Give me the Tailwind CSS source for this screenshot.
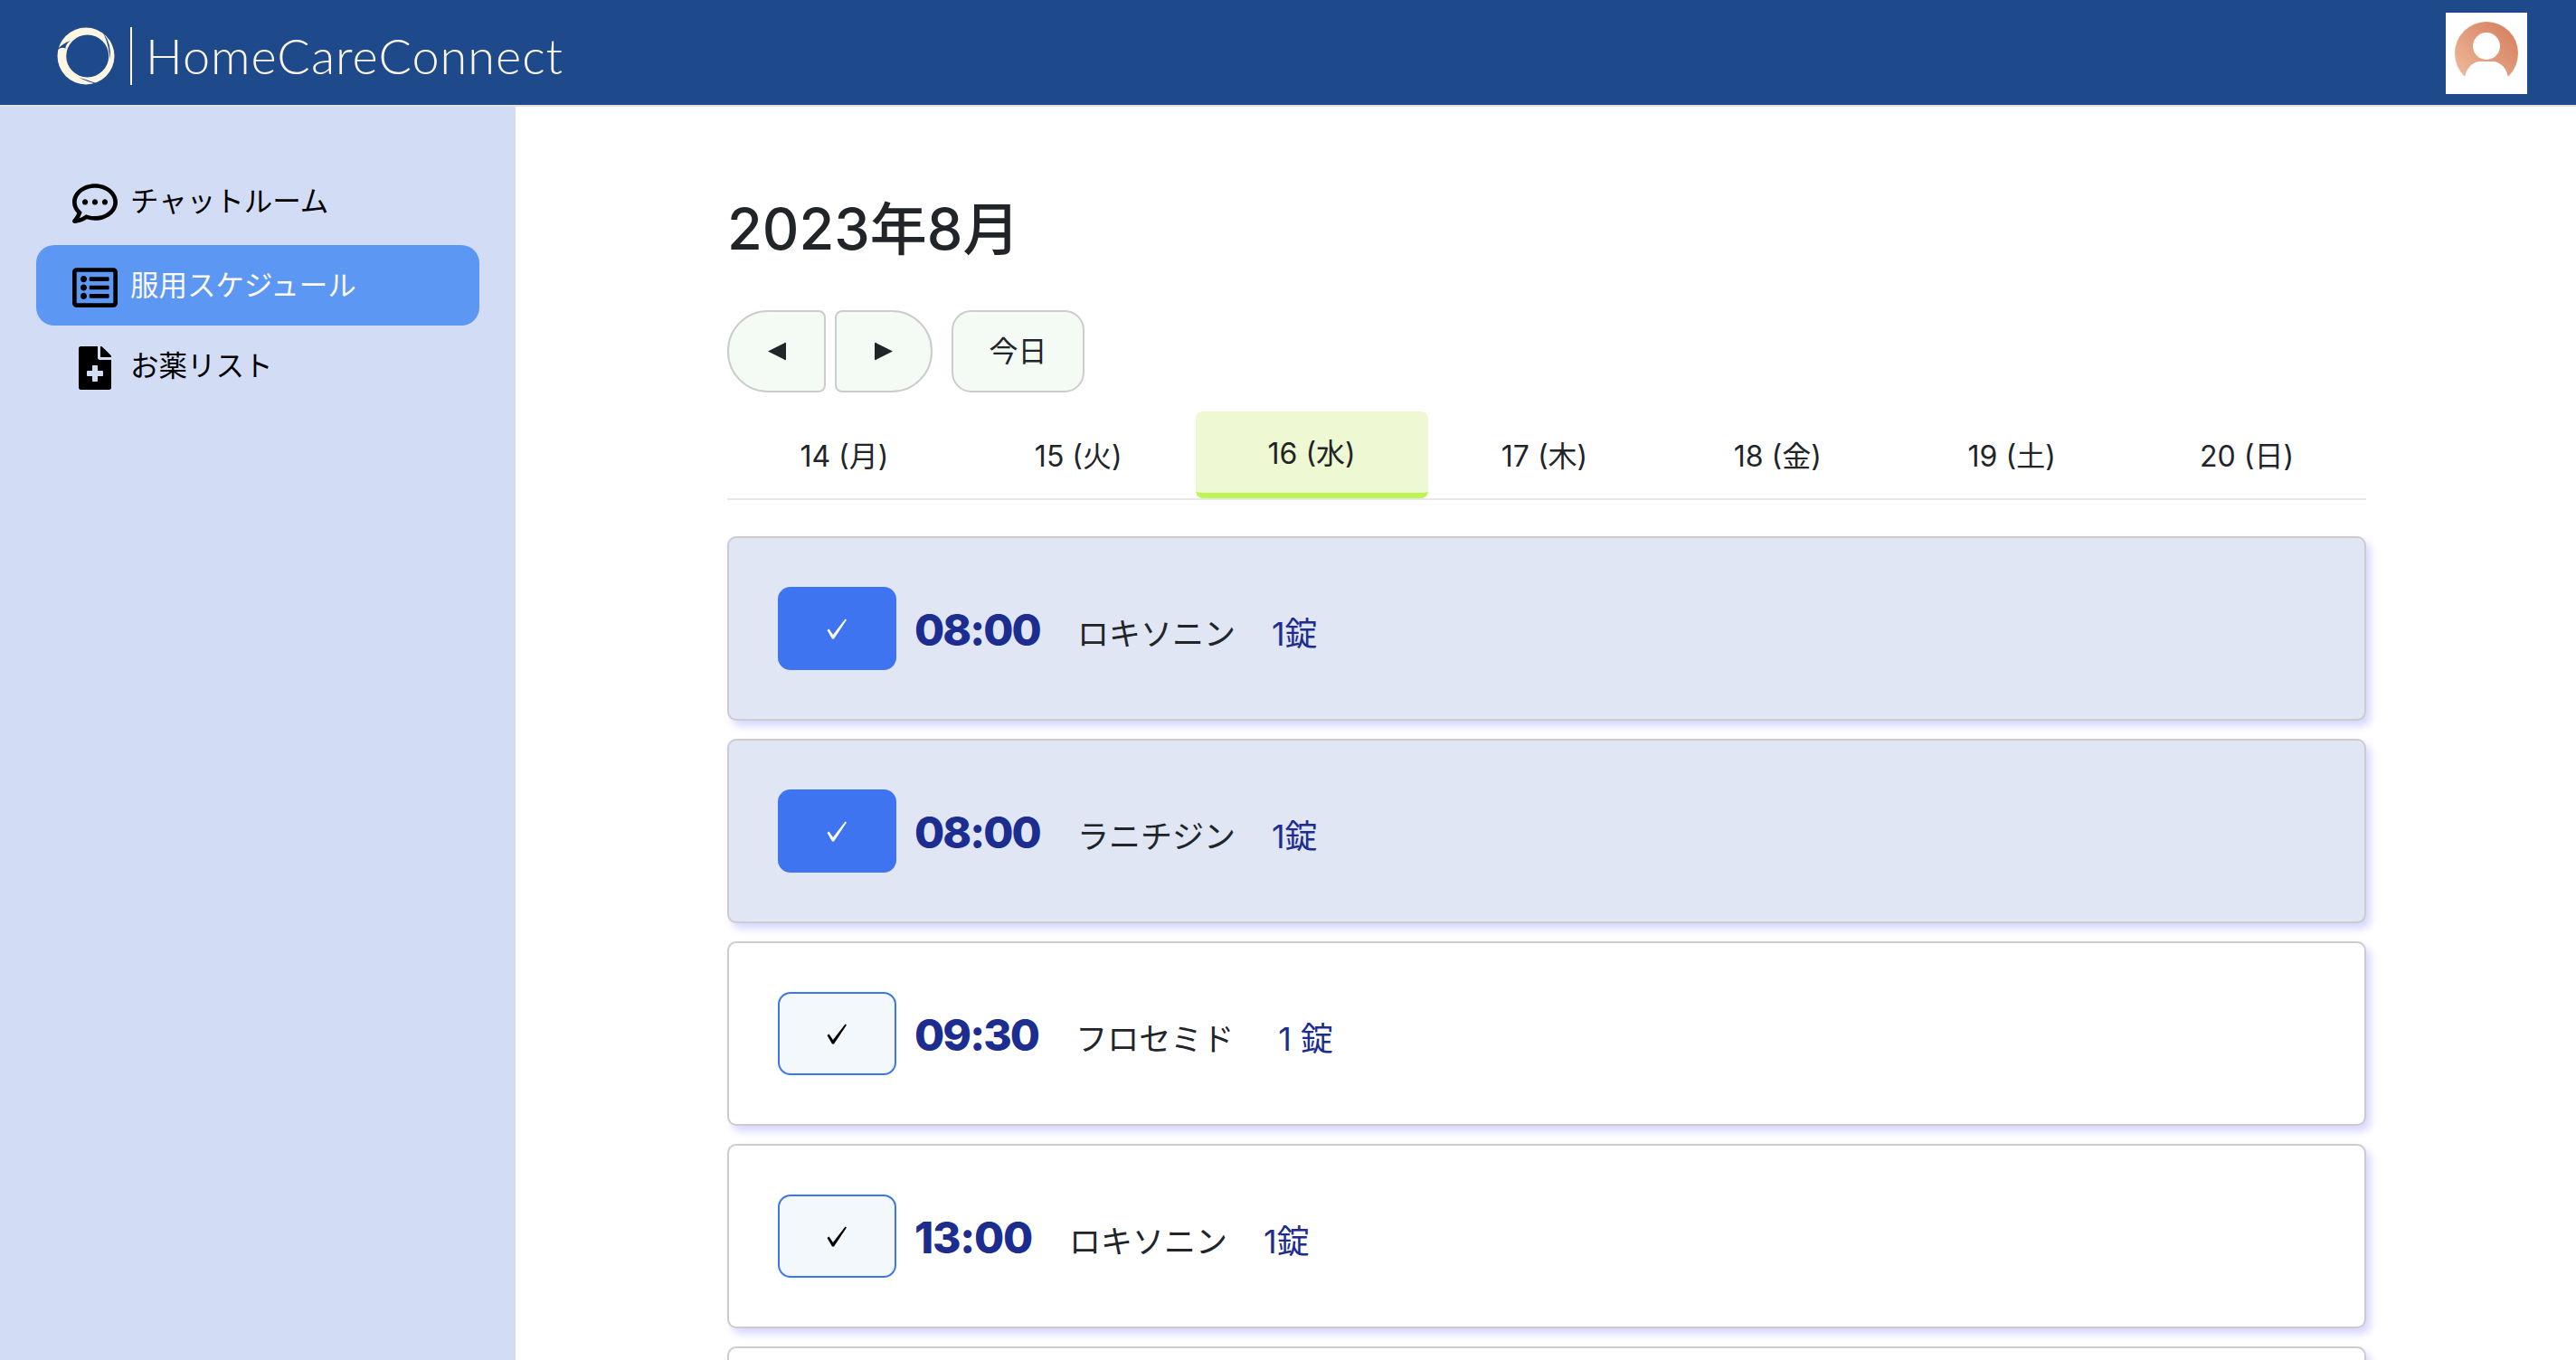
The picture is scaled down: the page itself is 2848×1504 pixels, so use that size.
<!DOCTYPE html>
<html lang="ja">
<head>
<meta charset="UTF-8">
<title>HomeCareConnect</title>
<script src="https://cdn.jsdelivr.net/npm/@tailwindcss/browser@4"></script>
</head>
<body class="h-screen overflow-hidden flex flex-col bg-white text-[#212529] font-['Inter','Noto_Sans_CJK_JP',sans-serif]">

<!-- header -->
<header class="h-[118px] shrink-0 flex items-center justify-between bg-[#1e4a8c] border-b-2 border-[#e2e2e2] pl-[62px] pr-[54px]">
  <div class="flex items-center mt-[7px]">
    <svg class="w-[66px] h-[66px]" viewBox="0 0 66 66">
      <path fill="#fdf6e3" fill-rule="evenodd" d="M33 1.500a31.500 31.500 0 1 0 0 63a31.500 31.500 0 1 0 0-63ZM34.700 9.500a23.500 23.500 0 1 1 0 47a23.500 23.500 0 1 1 0-47Z"/>
      <path fill="#1e4a8c" d="M1 26Q7 19 16 16Q10 20 10.500 25Q8 22 1 26Z"/>
      <path fill="#1e4a8c" d="M52 7Q62 20 59.500 37Q59 22 52 7Z"/>
      <path fill="#1e4a8c" d="M25 56.500Q36 60 47 64Q36 62.500 25 56.500Z"/>
    </svg>
    <div class="w-[2px] h-[64px] bg-[#fdf6e3] ml-[16px] mr-[15px]"></div>
    <span class="font-['Lato',sans-serif] font-light text-[54px] tracking-[1px] leading-none text-[#fdf6e3]">HomeCareConnect</span>
  </div>
  <div class="w-[90px] h-[90px] mt-[2px] bg-white flex items-center justify-center">
    <svg class="w-[90px] h-[90px]" viewBox="0 0 90 90">
      <defs>
        <linearGradient id="avatar-grad" x1="0" y1="1" x2="1" y2="0">
          <stop offset="0" stop-color="#f0bf9e"/>
          <stop offset="1" stop-color="#d27a5a"/>
        </linearGradient>
      </defs>
      <circle cx="45" cy="45" r="35" fill="url(#avatar-grad)"/>
      <circle cx="45" cy="37" r="15" fill="#fff"/>
      <path d="M21 90V74C21 62 30 54 38 54H52C60 54 69 62 69 74V90Z" fill="#fff"/>
    </svg>
  </div>
</header>

<div class="flex-1 flex min-h-0">
  <!-- sidebar -->
  <aside class="w-[570px] shrink-0 bg-[#d2dcf5] pt-[60px] pl-[40px] pr-[40px] text-[31.500px] leading-none text-black font-['Noto_Sans_CJK_JP',sans-serif]">
    <a class="h-[89px] mb-[4px] flex items-center gap-[14px] pl-[40px]">
      <svg class="w-[50px] h-[44px] shrink-0 mt-[4px]" viewBox="0 32 512 448" fill="currentColor">
        <path d="M144 208c-17.700 0-32 14.300-32 32s14.300 32 32 32 32-14.300 32-32-14.300-32-32-32zm112 0c-17.700 0-32 14.300-32 32s14.300 32 32 32 32-14.300 32-32-14.300-32-32-32zm112 0c-17.700 0-32 14.300-32 32s14.300 32 32 32 32-14.300 32-32-14.300-32-32-32zM256 32C114.600 32 0 125.100 0 240c0 47.600 19.900 91.200 52.900 126.300C38 405.700 7 439.100 6.500 439.500c-6.600 7-8.400 17.200-4.600 26S14.400 480 24 480c61.500 0 110-25.700 139.100-46.300C192 442.800 223.200 448 256 448c141.400 0 256-93.100 256-208S397.400 32 256 32zm0 368c-26.700 0-53.100-4.100-78.400-12.100l-22.700-7.200-19.500 13.800c-14.300 10.100-33.900 21.400-57.500 29 7.300-12.100 14.400-25.700 19.900-40.200l10.600-28.100-20.600-21.800C69.700 314.100 48 282.200 48 240c0-88.200 93.300-160 208-160s208 71.800 208 160-93.300 160-208 160z"/>
      </svg>
      <span class="mb-[3px]">チャットルーム</span>
    </a>
    <a class="h-[89px] flex items-center gap-[14px] pl-[40px] rounded-[20px] bg-[#5c98f3] text-[#fdf9ee]">
      <svg class="w-[50px] h-[44px] shrink-0 mt-[4px] text-black" viewBox="0 32 512 448" fill="currentColor">
        <path d="M464 32H48C21.490 32 0 53.490 0 80v352c0 26.510 21.490 48 48 48h416c26.510 0 48-21.490 48-48V80c0-26.510-21.490-48-48-48zm-6 400H54a6 6 0 0 1-6-6V86a6 6 0 0 1 6-6h404a6 6 0 0 1 6 6v340a6 6 0 0 1-6 6zm-42-92v24c0 6.627-5.373 12-12 12H204c-6.627 0-12-5.373-12-12v-24c0-6.627 5.373-12 12-12h200c6.627 0 12 5.373 12 12zm0-96v24c0 6.627-5.373 12-12 12H204c-6.627 0-12-5.373-12-12v-24c0-6.627 5.373-12 12-12h200c6.627 0 12 5.373 12 12zm0-96v24c0 6.627-5.373 12-12 12H204c-6.627 0-12-5.373-12-12v-24c0-6.627 5.373-12 12-12h200c6.627 0 12 5.373 12 12zm-252 12c0 19.882-16.118 36-36 36s-36-16.118-36-36 16.118-36 36-36 36 16.118 36 36zm0 96c0 19.882-16.118 36-36 36s-36-16.118-36-36 16.118-36 36-36 36 16.118 36 36zm0 96c0 19.882-16.118 36-36 36s-36-16.118-36-36 16.118-36 36-36 36 16.118 36 36z"/>
      </svg>
      <span class="mb-[3px]">服用スケジュール</span>
    </a>
    <a class="h-[89px] flex items-center gap-[14px] pl-[40px]">
      <span class="w-[50px] shrink-0 flex justify-center mt-[4px]">
        <svg class="w-[36px] h-[48px]" viewBox="0 0 384 512" fill="currentColor">
          <path d="M377 105L279.100 7c-4.500-4.500-10.600-7-17-7H256v128h128v-6.100c0-6.300-2.500-12.400-7-16.900zm-153 31V0H24C10.700 0 0 10.700 0 24v464c0 13.300 10.700 24 24 24h336c13.300 0 24-10.700 24-24V160H248c-13.200 0-24-10.800-24-24zm64 160v48c0 4.400-3.600 8-8 8h-56v56c0 4.400-3.600 8-8 8h-48c-4.400 0-8-3.600-8-8v-56h-56c-4.400 0-8-3.600-8-8v-48c0-4.400 3.600-8 8-8h56v-56c0-4.400 3.600-8 8-8h48c4.400 0 8 3.600 8 8v56h56c4.400 0 8 3.600 8 8z"/>
        </svg>
      </span>
      <span class="mb-[3px]">お薬リスト</span>
    </a>
  </aside>

  <!-- main -->
  <main class="flex-1 min-w-0 overflow-hidden pl-[234px] pr-[232px] pt-[99px]">
    <h1 class="text-[63px] leading-[72px] font-medium">2023年8月</h1>

    <div class="flex mt-[54px] h-[91px] text-[32px]">
      <button class="w-[109px] bg-[#f3fbf4] border-2 border-[#cccccc] rounded-l-[45px] rounded-r-[8px] flex items-center justify-center">
        <svg class="w-[21px] h-[21px]" viewBox="0 0 21 21" fill="#212529"><path d="M1 10.500L19 1.500a1 1 0 0 1 2 1v16a1 1 0 0 1-2 1Z"/></svg>
      </button>
      <button class="w-[108px] ml-[10px] bg-[#f3fbf4] border-2 border-[#cccccc] rounded-r-[45px] rounded-l-[8px] flex items-center justify-center">
        <svg class="w-[21px] h-[21px]" viewBox="0 0 21 21" fill="#212529"><path d="M20 10.500L2 1.500a1 1 0 0 0-2 1v16a1 1 0 0 0 2 1Z"/></svg>
      </button>
      <button class="w-[147px] ml-[21px] bg-[#f3fbf4] border-2 border-[#cccccc] rounded-[22px]">今日</button>
    </div>

    <!-- day tabs -->
    <div class="grid grid-cols-7 mt-[21px] h-[98px] border-b-2 border-[#e8e8e8] text-[32px]">
      <div class="flex items-center justify-center pt-[4px]">14 (月)</div>
      <div class="flex items-center justify-center pt-[4px]">15 (火)</div>
      <div class="flex items-center justify-center pt-[4px] mr-[2px] bg-[#eef8d2] border-b-[6px] border-[#bbf651] rounded-[8px]">16 (水)</div>
      <div class="flex items-center justify-center pt-[4px] pr-[5px]">17 (木)</div>
      <div class="flex items-center justify-center pt-[4px] pr-[7px]">18 (金)</div>
      <div class="flex items-center justify-center pt-[4px] pr-[7px]">19 (土)</div>
      <div class="flex items-center justify-center pt-[4px] pr-[5px]">20 (日)</div>
    </div>

    <!-- dose cards -->
    <div class="mt-[40px] flex flex-col gap-[20px]">
      <div class="h-[204px] shrink-0 flex items-center pl-[54px] bg-[#e0e6f4] border-2 border-[#cccccc] rounded-[10px] shadow-[5px_6px_10px_#d6d6ff]">
        <button class="w-[131px] h-[92px] shrink-0 flex items-center justify-center rounded-[14px] bg-[#3f74f0] text-white">
          <svg class="w-[23px] h-[23px]" viewBox="0 0 23 23" fill="currentColor"><path d="M0.500 13L2.500 11.500L7 18L20.500 0.500L22 1.500L8 22.500H6Z"/></svg>
        </button>
        <div class="flex items-baseline ml-[20px] mt-[3px]">
          <span class="text-[48px] font-extrabold tracking-[-1.900px] text-[#1c2d8f]">08:00</span>
          <span class="text-[35px] ml-[41px]">ロキソニン</span>
          <span class="text-[36px] ml-[40px] text-[#1c2d8f]">1錠</span>
        </div>
      </div>
      <div class="h-[204px] shrink-0 flex items-center pl-[54px] bg-[#e0e6f4] border-2 border-[#cccccc] rounded-[10px] shadow-[5px_6px_10px_#d6d6ff]">
        <button class="w-[131px] h-[92px] shrink-0 flex items-center justify-center rounded-[14px] bg-[#3f74f0] text-white">
          <svg class="w-[23px] h-[23px]" viewBox="0 0 23 23" fill="currentColor"><path d="M0.500 13L2.500 11.500L7 18L20.500 0.500L22 1.500L8 22.500H6Z"/></svg>
        </button>
        <div class="flex items-baseline ml-[20px] mt-[3px]">
          <span class="text-[48px] font-extrabold tracking-[-1.900px] text-[#1c2d8f]">08:00</span>
          <span class="text-[35px] ml-[41px]">ラニチジン</span>
          <span class="text-[36px] ml-[40px] text-[#1c2d8f]">1錠</span>
        </div>
      </div>
      <div class="h-[204px] shrink-0 flex items-center pl-[54px] bg-white border-2 border-[#cccccc] rounded-[10px] shadow-[5px_6px_10px_#d6d6ff]">
        <button class="w-[131px] h-[92px] shrink-0 flex items-center justify-center rounded-[14px] bg-[#f3f8fc] border-2 border-[#3f74f0] text-black">
          <svg class="w-[23px] h-[23px]" viewBox="0 0 23 23" fill="currentColor"><path d="M0.500 13L2.500 11.500L7 18L20.500 0.500L22 1.500L8 22.500H6Z"/></svg>
        </button>
        <div class="flex items-baseline ml-[20px] mt-[3px]">
          <span class="text-[48px] font-extrabold tracking-[-1.900px] text-[#1c2d8f]">09:30</span>
          <span class="text-[35px] ml-[41px]">フロセミド</span>
          <span class="text-[36px] ml-[49px] text-[#1c2d8f]">1 錠</span>
        </div>
      </div>
      <div class="h-[204px] shrink-0 flex items-center pl-[54px] bg-white border-2 border-[#cccccc] rounded-[10px] shadow-[5px_6px_10px_#d6d6ff]">
        <button class="w-[131px] h-[92px] shrink-0 flex items-center justify-center rounded-[14px] bg-[#f3f8fc] border-2 border-[#3f74f0] text-black">
          <svg class="w-[23px] h-[23px]" viewBox="0 0 23 23" fill="currentColor"><path d="M0.500 13L2.500 11.500L7 18L20.500 0.500L22 1.500L8 22.500H6Z"/></svg>
        </button>
        <div class="flex items-baseline ml-[20px] mt-[3px]">
          <span class="text-[48px] font-extrabold tracking-[-1.200px] text-[#1c2d8f]">13:00</span>
          <span class="text-[35px] ml-[41px]">ロキソニン</span>
          <span class="text-[36px] ml-[40px] text-[#1c2d8f]">1錠</span>
        </div>
      </div>
      <div class="h-[204px] shrink-0 bg-white border-2 border-[#cccccc] rounded-[10px] shadow-[5px_6px_10px_#d6d6ff]"></div>
    </div>
  </main>
</div>
</body>
</html>
